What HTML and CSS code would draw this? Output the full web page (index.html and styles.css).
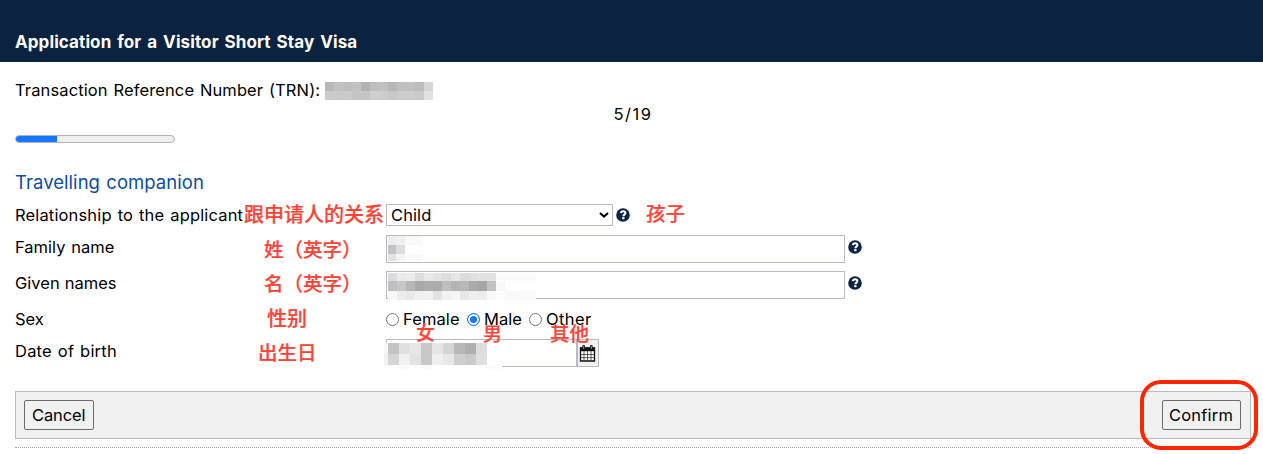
FILE: index.html
```html
<!DOCTYPE html>
<html lang="en">
<head>
<meta charset="utf-8">
<title>Application for a Visitor Short Stay Visa</title>
<link rel="stylesheet" href="styles.css">
</head>
<body>
<svg class="defs" width="0" height="0" aria-hidden="true">
  <symbol id="help" viewBox="0 0 14 14"><circle cx="7" cy="7" r="6.8" fill="#0b2341"/><path d="M4.8 5.2C5 3.8 5.9 3.2 7.1 3.2c1.3 0 2.3.8 2.3 1.9 0 1.5-2 1.6-2 3.1" fill="none" stroke="#fff" stroke-width="2.1"/><path d="M6.2 9.1h2.3v2.1H6.2z" fill="#fff"/></symbol>
</svg>
<header class="banner"><h1 class="title">Application for a Visitor Short Stay Visa</h1></header>
<main class="page">
  <div class="trn"><span class="trn-label">Transaction Reference Number (TRN):</span>
    <div class="mosaic m-trn"></div></div>
  <div class="step">5/19</div>
  <div class="progress"><div class="progress-fill"></div></div>
  <h2 class="section">Travelling companion</h2>
  <div class="row row-rel"><label class="label l-rel">Relationship to the applicant</label>
    <div class="select"><span class="child">Child</span><svg class="chevron" viewBox="0 0 10 6"><path d="M1 1l4 3.6L9 1" fill="none" stroke="#000" stroke-width="2"/></svg></div>
    <svg class="help"><use href="#help"/></svg></div>
  <div class="row row-text"><label class="label l-family">Family name</label>
    <div class="input"><div class="mosaic m-family"></div></div><svg class="help"><use href="#help"/></svg></div>
  <div class="row row-text"><label class="label l-given">Given names</label>
    <div class="input"><div class="mosaic m-given"></div></div><svg class="help"><use href="#help"/></svg></div>
  <div class="row row-sex"><span class="label l-sex">Sex</span>
    <div class="radios"><i class="radio"></i><span class="opt o-female">Female</span><i class="radio on"></i><span class="opt o-male">Male</span><i class="radio"></i><span class="opt o-other">Other</span></div></div>
  <div class="row row-date"><label class="label l-date">Date of birth</label>
    <div class="input date"><div class="mosaic m-date"></div></div>
    <div class="cal"><svg class="cal-icon" viewBox="0 0 16 17"><path d="M1 3h14v13H1z" fill="#fff" stroke="#111" stroke-width="1.3"/><path d="M.5 2.6h15v3.6H.5z" fill="#111"/><path d="M4.5 6v10M8 6v10M11.5 6v10M1 9.5h14M1 12.7h14" stroke="#333" stroke-width=".8"/><path d="M4.2 1.4v2.2M11.8 1.4v2.2" stroke="#111" stroke-width="2.8" stroke-linecap="round"/><path d="M4.2 1.4v2.2M11.8 1.4v2.2" stroke="#999" stroke-width="1" stroke-linecap="round"/></svg></div></div>
  <div class="actions"><div class="btn b-cancel"><span class="t-cancel">Cancel</span></div><div class="btn b-confirm"><span class="t-confirm">Confirm</span></div></div>
  <div class="rule"></div>
</main>
<div class="notes" lang="zh-CN">
  <span class="note n-rel">跟申请人的关系</span><span class="note n-child">孩子</span>
  <span class="note n-family">姓（英字）</span><span class="note n-given">名（英字）</span>
  <span class="note n-sex">性别</span><span class="note n-f">女</span><span class="note n-m">男</span><span class="note n-o">其他</span>
  <span class="note n-date">出生日</span>
  <div class="ring"></div>
</div>
<script src="mosaic.js"></script>
</body>
</html>
```
FILE: styles.css
```css
* { box-sizing: border-box; }
body { margin: 0; position: relative; height: 454px; overflow: hidden; background: #fff; color: #000; font: 385 16.5px/24px Inter, "Liberation Sans", sans-serif; white-space: nowrap; }
.defs { position: absolute; }
.banner { height: 62px; background: #0b2341; padding: 30px 15px 0; }
.title { margin: 0; color: #fff; font-size: 17px; line-height: 24px; font-weight: 650; letter-spacing: .1px; word-spacing: 1.8px; }
.page { padding: 16px 12px 0 15px; }
.trn { display: flex; height: 24px; }
.trn-label { width: 310px; letter-spacing: .12px; word-spacing: 1px; }
.m-trn { margin-top: 4px; width: 110px; }
.step { height: 24px; text-align: center; letter-spacing: 1.5px; }
.progress { margin-top: 9px; width: 160px; height: 8px; border: 1px solid #b4b4b4; border-radius: 4px; background: #efefef; overflow: hidden; }
.progress-fill { width: 41px; height: 8px; margin-top: -1px; background: #1577ff; }
.section { margin: 27px 0 0; height: 24px; font-size: 18.5px; font-weight: 370; line-height: 24px; color: #0b4ea2; letter-spacing: .05px; word-spacing: 1px; }
.row { display: flex; }
.row > .label { width: 371px; flex: none; }
.row-rel { margin-top: 10px; height: 23px; }
.row-rel .label { margin-top: -1px; letter-spacing: .15px; word-spacing: 1.2px; }
.l-family { word-spacing: 1.2px; }
.l-given { word-spacing: .5px; }
.l-date { letter-spacing: .22px; word-spacing: 1px; }
.select { width: 227px; height: 22px; border: 1px solid #b9b9c3; padding: 0 3px 0 4px; display: flex; justify-content: space-between; align-items: center; }
.child { letter-spacing: .1px; }
.chevron { width: 10px; height: 6px; }
.help { width: 14px; height: 14px; margin: 5px 0 0 3px; flex: none; }
.row-rel .help { margin-top: 4px; }
.row-text { margin-top: 8px; height: 28px; }
.input { width: 459px; height: 28px; border: 1px solid #b9b9c3; padding: 1px; }
.row-sex { margin-top: 8px; height: 24px; }
.radios { display: flex; align-items: center; }
.radio { width: 13px; height: 13px; border: 1px solid #767676; border-radius: 50%; margin-right: 4px; flex: none; }
.radio.on { border-color: #1577ff; background: #1577ff; box-shadow: inset 0 0 0 2px #fff; }
.o-female { width: 64px; letter-spacing: .1px; }
.o-male { width: 45px; }
.o-other { letter-spacing: .4px; }
.row-date { margin-top: 8px; height: 28px; }
.date { width: 191px; }
.cal { width: 22px; height: 28px; border: 1px solid #b9b9c3; background: #f1f1f1; padding: 5px 0 0 1px; }
.cal-icon { display: block; width: 17px; height: 17px; }
.actions { margin-top: 24px; width: 1236px; height: 48px; border: 1px solid #b9b9c3; background: #f1f1f1; display: flex; justify-content: space-between; padding: 8px 9px 0 8px; }
.btn { height: 30px; border: 1px solid #6b6b6b; border-radius: 2px; line-height: 28px; padding-left: 7px; }
.b-cancel { width: 70px; letter-spacing: -.1px; }
.b-confirm { width: 79px; padding-left: 6px; letter-spacing: .2px; }
.rule { margin-top: 8px; width: 1236px; border-top: 1px dotted #aaa; }
.mosaic { display: grid; position: relative; }
.m-family { width: 35px; margin-top: -1px; }
.m-given { width: 148px; }
.m-date { width: 118px; margin: 2px 0 0 -4px; }
.notes { position: absolute; inset: 0; }
.note { position: absolute; color: #ff4238; font: 500 19px/24px "Noto Sans CJK SC", sans-serif; -webkit-text-stroke: .2px #ff4238; }
.n-rel { left: 244px; top: 202px; font-size: 20px; }
.n-child { left: 646px; top: 201px; font-size: 19.5px; }
.n-family { left: 264px; top: 237px; font-size: 19.5px; }
.n-given { left: 264px; top: 271px; font-size: 19.5px; }
.n-sex { left: 267px; top: 306px; font-size: 20px; }
.n-f { left: 416px; top: 320px; }
.n-m { left: 483px; top: 321px; }
.n-o { left: 550px; top: 321px; font-size: 19.5px; }
.n-date { left: 258px; top: 340px; font-size: 19.5px; }
.ring { position: absolute; left: 1140px; top: 380px; width: 118px; height: 70px; border: 4px solid #ff2600; border-radius: 21px; }
```
FILE: mosaic.js
```js
// Pixelated redaction blocks: column widths, row heights and grey levels.
const blocks = {
  'm-trn': { cols: Array(12).fill(9), rows: [9, 9], cells: [
    [184,194,191,194,178,190,192,183,192,192,188,214],
    [203,201,203,197,198,207,205,200,205,205,202,225]] },
  'm-family': { cols: [8, 9, 9, 9], rows: [9, 9, 7], cells: [
    [236,240,249,250],[195,220,255,255],[226,243,251,249]] },
  'm-given': { cols: [9,9,9,9,9,9,9,9,9,9,9,9,9,9,9,13], rows: [8, 10, 9], cells: [
    [219,233,236,221,232,228,221,230,219,223,227,227,252,252,252,252],
    [192,199,182,169,173,171,190,180,184,170,165,194,248,255,255,255],
    [248,237,233,240,241,226,242,246,232,239,237,248,253,249,249,250]] },
  'm-date': { cols: [4,11,11,11,11,11,11,11,11,11,15], rows: [11, 11, 4], cells: [
    [247,195,225,231,199,230,213,185,175,222,255],
    [243,213,241,227,200,239,232,207,202,223,255],
    [252,255,250,255,250,255,255,255,255,255,251]] }
};
for (const [name, b] of Object.entries(blocks)) {
  const el = document.querySelector('.' + name);
  el.style.gridTemplateColumns = b.cols.map(v => v + 'px').join(' ');
  el.style.gridTemplateRows = b.rows.map(v => v + 'px').join(' ');
  for (const v of b.cells.flat()) {
    const c = document.createElement('i');
    c.style.background = `rgb(${v},${v},${v})`;
    el.append(c);
  }
}
```
